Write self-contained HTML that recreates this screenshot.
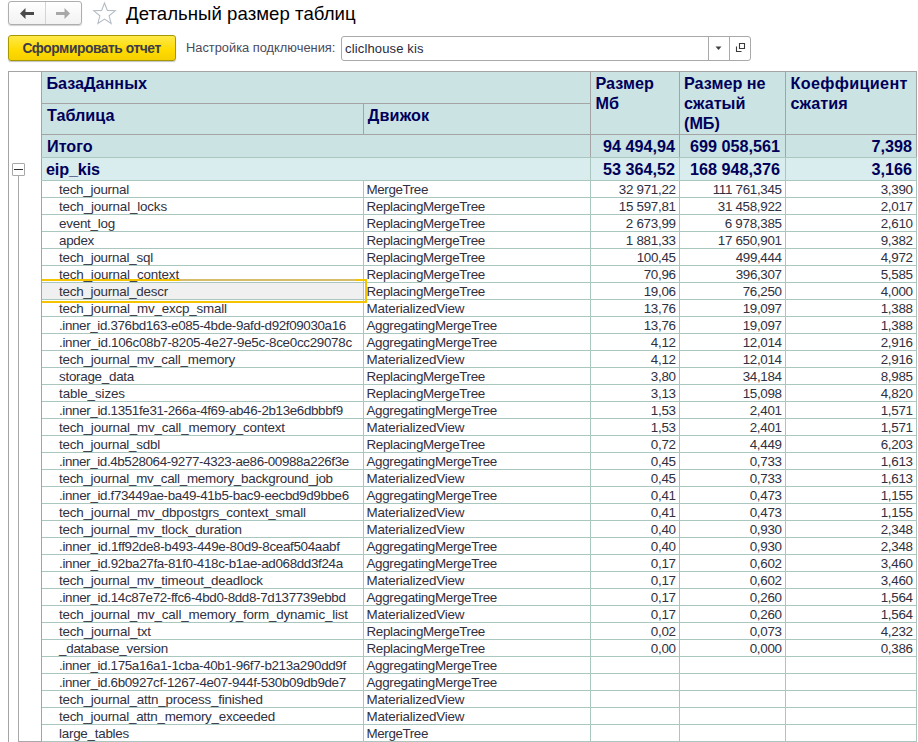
<!DOCTYPE html>
<html><head><meta charset="utf-8"><style>
html,body{margin:0;padding:0;background:#fff;width:918px;height:742px;overflow:hidden;position:relative}
body>div,body>svg{position:absolute}
.t{font-family:"Liberation Sans",sans-serif;white-space:nowrap}
</style></head><body>
<div style="left:8px;top:1px;width:74px;height:24px;border:1px solid #aeaeae;border-radius:3px;box-sizing:border-box;background:linear-gradient(#ffffff,#f2f2f2);box-shadow:0 1px 1px rgba(0,0,0,0.18)"></div>
<div style="left:45px;top:2px;width:1px;height:22px;background:#d4d4d4"></div>
<svg style="left:19px;top:7px" width="16" height="13" viewBox="0 0 16 13"><path d="M1 6.5 L6.5 1 L6.5 5 L15 5 L15 8 L6.5 8 L6.5 12 Z" fill="#4a4a4a"/></svg>
<svg style="left:55px;top:7px" width="16" height="13" viewBox="0 0 16 13"><path d="M15 6.5 L9.5 1 L9.5 5 L1 5 L1 8 L9.5 8 L9.5 12 Z" fill="#a8a8a8"/></svg>
<svg style="left:0px;top:0px" width="130" height="28" viewBox="0 0 130 28"><path d="M104.50 3.00 L107.36 10.37 L115.25 10.81 L109.12 15.80 L111.14 23.44 L104.50 19.16 L97.86 23.44 L99.88 15.80 L93.75 10.81 L101.64 10.37 Z" fill="none" stroke="#b4bcc4" stroke-width="1.1" stroke-linejoin="miter"/></svg>
<div class="t" style="left:126px;top:4.76px;font-size:18.6px;line-height:18.6px;font-weight:400;color:#000000;letter-spacing:0.043px;">Детальный размер таблиц</div>
<div style="left:8px;top:35px;width:168px;height:26px;border:1px solid #a89800;border-radius:3px;box-sizing:border-box;background:linear-gradient(#ffe94a,#ffdb00 60%,#f5d000);box-shadow:0 1px 1px rgba(0,0,0,0.25)"></div>
<div class="t" style="left:22.5px;top:41.52px;font-size:13.8px;line-height:13.8px;font-weight:700;color:#3c3c48;letter-spacing:-0.434px;">Сформировать отчет</div>
<div class="t" style="left:186px;top:42.02px;font-size:12.85px;line-height:12.85px;font-weight:400;color:#4a4a5a;">Настройка подключения:</div>
<div style="left:341px;top:36px;width:410px;height:25px;border:1px solid #a9a9a9;border-radius:3px;box-sizing:border-box;background:#fff"></div>
<div style="left:708px;top:37px;width:1px;height:23px;background:#a9a9a9"></div>
<div style="left:729px;top:37px;width:1px;height:23px;background:#a9a9a9"></div>
<div class="t" style="left:345px;top:41.60px;font-size:13px;line-height:13px;font-weight:400;color:#2a2a3a;letter-spacing:0.15px">cliclhouse kis</div>
<svg style="left:715px;top:45.5px" width="7" height="5" viewBox="0 0 7 5"><path d="M0.5 0.5 L6.5 0.5 L3.5 4 Z" fill="#404040"/></svg>
<svg style="left:735px;top:42px" width="11" height="11" viewBox="0 0 11 11"><path d="M4.5 1.5 H9.5 V6.5 H4.5 Z" fill="none" stroke="#3a3a3a" stroke-width="1.1"/><path d="M1.5 4.5 V9.5 H6.5" fill="none" stroke="#3a3a3a" stroke-width="1.1"/></svg>
<div style="left:41px;top:71px;width:875px;height:86px;background:#cbe3e3"></div>
<div style="left:41px;top:157px;width:875px;height:23px;background:#d9ecee"></div>
<div style="left:9px;top:72px;width:32px;height:669px;background:#fff"></div>
<div style="left:42px;top:181px;width:874px;height:560px;background:#fff"></div>
<div style="left:42px;top:283px;width:321px;height:16px;background:#f0f0f0"></div>
<div style="left:8px;top:71px;width:909px;height:1px;background:#a4a4a4"></div>
<div style="left:8px;top:71px;width:1px;height:671px;background:#a4a4a4"></div>
<div style="left:916px;top:71px;width:1px;height:86px;background:#a4a4a4"></div>
<div style="left:916px;top:157px;width:1px;height:585px;background:#a9c7bf"></div>
<div style="left:41px;top:71px;width:1px;height:671px;background:#a4a4a4"></div>
<div style="left:41px;top:103px;width:549px;height:1px;background:#a4a4a4"></div>
<div style="left:41px;top:134px;width:875px;height:1px;background:#a4a4a4"></div>
<div style="left:41px;top:157px;width:875px;height:1px;background:#a9c7bf"></div>
<div style="left:41px;top:180px;width:875px;height:1px;background:#a9c7bf"></div>
<div style="left:363px;top:103px;width:1px;height:31px;background:#a4a4a4"></div>
<div style="left:590px;top:71px;width:1px;height:86px;background:#a4a4a4"></div>
<div style="left:590px;top:157px;width:1px;height:585px;background:#a9c7bf"></div>
<div style="left:679px;top:71px;width:1px;height:86px;background:#a4a4a4"></div>
<div style="left:679px;top:157px;width:1px;height:585px;background:#a9c7bf"></div>
<div style="left:785px;top:71px;width:1px;height:86px;background:#a4a4a4"></div>
<div style="left:785px;top:157px;width:1px;height:585px;background:#a9c7bf"></div>
<div style="left:363px;top:180px;width:1px;height:562px;background:#a9c7bf"></div>
<div style="left:42px;top:197px;width:874px;height:1px;background:#a9c7bf"></div>
<div style="left:42px;top:214px;width:874px;height:1px;background:#a9c7bf"></div>
<div style="left:42px;top:231px;width:874px;height:1px;background:#a9c7bf"></div>
<div style="left:42px;top:248px;width:874px;height:1px;background:#a9c7bf"></div>
<div style="left:42px;top:265px;width:874px;height:1px;background:#a9c7bf"></div>
<div style="left:42px;top:282px;width:874px;height:1px;background:#a9c7bf"></div>
<div style="left:42px;top:299px;width:874px;height:1px;background:#a9c7bf"></div>
<div style="left:42px;top:316px;width:874px;height:1px;background:#a9c7bf"></div>
<div style="left:42px;top:333px;width:874px;height:1px;background:#a9c7bf"></div>
<div style="left:42px;top:350px;width:874px;height:1px;background:#a9c7bf"></div>
<div style="left:42px;top:367px;width:874px;height:1px;background:#a9c7bf"></div>
<div style="left:42px;top:384px;width:874px;height:1px;background:#a9c7bf"></div>
<div style="left:42px;top:401px;width:874px;height:1px;background:#a9c7bf"></div>
<div style="left:42px;top:418px;width:874px;height:1px;background:#a9c7bf"></div>
<div style="left:42px;top:435px;width:874px;height:1px;background:#a9c7bf"></div>
<div style="left:42px;top:452px;width:874px;height:1px;background:#a9c7bf"></div>
<div style="left:42px;top:469px;width:874px;height:1px;background:#a9c7bf"></div>
<div style="left:42px;top:486px;width:874px;height:1px;background:#a9c7bf"></div>
<div style="left:42px;top:503px;width:874px;height:1px;background:#a9c7bf"></div>
<div style="left:42px;top:520px;width:874px;height:1px;background:#a9c7bf"></div>
<div style="left:42px;top:537px;width:874px;height:1px;background:#a9c7bf"></div>
<div style="left:42px;top:554px;width:874px;height:1px;background:#a9c7bf"></div>
<div style="left:42px;top:571px;width:874px;height:1px;background:#a9c7bf"></div>
<div style="left:42px;top:588px;width:874px;height:1px;background:#a9c7bf"></div>
<div style="left:42px;top:605px;width:874px;height:1px;background:#a9c7bf"></div>
<div style="left:42px;top:622px;width:874px;height:1px;background:#a9c7bf"></div>
<div style="left:42px;top:639px;width:874px;height:1px;background:#a9c7bf"></div>
<div style="left:42px;top:656px;width:874px;height:1px;background:#a9c7bf"></div>
<div style="left:42px;top:673px;width:874px;height:1px;background:#a9c7bf"></div>
<div style="left:42px;top:690px;width:874px;height:1px;background:#a9c7bf"></div>
<div style="left:42px;top:707px;width:874px;height:1px;background:#a9c7bf"></div>
<div style="left:42px;top:724px;width:874px;height:1px;background:#a9c7bf"></div>
<div style="left:42px;top:741px;width:874px;height:1px;background:#a9c7bf"></div>
<div style="left:12px;top:163px;width:13px;height:13px;border:1px solid #a8a8a8;box-sizing:border-box;background:#fff;border-radius:1px"></div>
<div style="left:14px;top:169px;width:9px;height:1px;background:#333"></div>
<div style="left:18px;top:176px;width:1px;height:565px;background:#a8a8a8"></div>
<div style="left:18px;top:741px;width:23px;height:1px;background:#a8a8a8"></div>
<div class="t" style="left:46.4px;top:75.29px;font-size:16.2px;line-height:16.2px;font-weight:700;color:#00005a;">БазаДанных</div>
<div class="t" style="left:47px;top:107.29px;font-size:16.2px;line-height:16.2px;font-weight:700;color:#00005a;">Таблица</div>
<div class="t" style="left:367.8px;top:107.29px;font-size:16.2px;line-height:16.2px;font-weight:700;color:#00005a;letter-spacing:0.167px;">Движок</div>
<div class="t" style="left:595.5px;top:75.09px;font-size:16.2px;line-height:16.2px;font-weight:700;color:#00005a;">Размер</div>
<div class="t" style="left:595.5px;top:95.09px;font-size:16.2px;line-height:16.2px;font-weight:700;color:#00005a;">Мб</div>
<div class="t" style="left:684px;top:75.09px;font-size:16.2px;line-height:16.2px;font-weight:700;color:#00005a;">Размер не</div>
<div class="t" style="left:684px;top:95.09px;font-size:16.2px;line-height:16.2px;font-weight:700;color:#00005a;">сжатый</div>
<div class="t" style="left:684px;top:115.09px;font-size:16.2px;line-height:16.2px;font-weight:700;color:#00005a;">(МБ)</div>
<div class="t" style="left:790.6px;top:75.09px;font-size:16.2px;line-height:16.2px;font-weight:700;color:#00005a;letter-spacing:0.318px;">Коеффициент</div>
<div class="t" style="left:790.6px;top:95.09px;font-size:16.2px;line-height:16.2px;font-weight:700;color:#00005a;">сжатия</div>
<div class="t" style="left:47px;top:137.99px;font-size:16.2px;line-height:16.2px;font-weight:700;color:#00005a;">Итого</div>
<div class="t" style="right:243.00px;top:137.99px;font-size:16.2px;line-height:16.2px;font-weight:700;color:#00005a;text-align:right;">94 494,94</div>
<div class="t" style="right:138.00px;top:137.79px;font-size:16.2px;line-height:16.2px;font-weight:700;color:#00005a;text-align:right;">699 058,561</div>
<div class="t" style="right:6.00px;top:137.99px;font-size:16.2px;line-height:16.2px;font-weight:700;color:#00005a;text-align:right;">7,398</div>
<div class="t" style="left:46px;top:161.29px;font-size:16.2px;line-height:16.2px;font-weight:700;color:#00005a;letter-spacing:-0.143px;">eip_kis</div>
<div class="t" style="right:243.00px;top:161.29px;font-size:16.2px;line-height:16.2px;font-weight:700;color:#00005a;text-align:right;">53 364,52</div>
<div class="t" style="right:138.00px;top:161.29px;font-size:16.2px;line-height:16.2px;font-weight:700;color:#00005a;text-align:right;">168 948,376</div>
<div class="t" style="right:6.00px;top:161.29px;font-size:16.2px;line-height:16.2px;font-weight:700;color:#00005a;text-align:right;">3,166</div>
<div class="t" style="left:59px;top:182.66px;font-size:13.4px;line-height:13.4px;font-weight:400;color:#303040;letter-spacing:-0.251px;">tech_journal</div>
<div class="t" style="left:366.5px;top:182.66px;font-size:13.4px;line-height:13.4px;font-weight:400;color:#303040;letter-spacing:-0.393px;">MergeTree</div>
<div class="t" style="right:242.29px;top:182.66px;font-size:13.4px;line-height:13.4px;font-weight:400;color:#303040;text-align:right;letter-spacing:-0.290px;">32 971,22</div>
<div class="t" style="right:136.32px;top:182.66px;font-size:13.4px;line-height:13.4px;font-weight:400;color:#303040;text-align:right;letter-spacing:-0.320px;">111 761,345</div>
<div class="t" style="right:5.31px;top:182.66px;font-size:13.4px;line-height:13.4px;font-weight:400;color:#303040;text-align:right;letter-spacing:-0.307px;">3,390</div>
<div class="t" style="left:59px;top:199.66px;font-size:13.4px;line-height:13.4px;font-weight:400;color:#303040;letter-spacing:-0.166px;">tech_journal_locks</div>
<div class="t" style="left:366.5px;top:199.66px;font-size:13.4px;line-height:13.4px;font-weight:400;color:#303040;letter-spacing:-0.340px;">ReplacingMergeTree</div>
<div class="t" style="right:242.29px;top:199.66px;font-size:13.4px;line-height:13.4px;font-weight:400;color:#303040;text-align:right;letter-spacing:-0.290px;">15 597,81</div>
<div class="t" style="right:136.31px;top:199.66px;font-size:13.4px;line-height:13.4px;font-weight:400;color:#303040;text-align:right;letter-spacing:-0.307px;">31 458,922</div>
<div class="t" style="right:5.31px;top:199.66px;font-size:13.4px;line-height:13.4px;font-weight:400;color:#303040;text-align:right;letter-spacing:-0.307px;">2,017</div>
<div class="t" style="left:59px;top:216.66px;font-size:13.4px;line-height:13.4px;font-weight:400;color:#303040;letter-spacing:-0.235px;">event_log</div>
<div class="t" style="left:366.5px;top:216.66px;font-size:13.4px;line-height:13.4px;font-weight:400;color:#303040;letter-spacing:-0.340px;">ReplacingMergeTree</div>
<div class="t" style="right:242.27px;top:216.66px;font-size:13.4px;line-height:13.4px;font-weight:400;color:#303040;text-align:right;letter-spacing:-0.270px;">2 673,99</div>
<div class="t" style="right:136.29px;top:216.66px;font-size:13.4px;line-height:13.4px;font-weight:400;color:#303040;text-align:right;letter-spacing:-0.290px;">6 978,385</div>
<div class="t" style="right:5.31px;top:216.66px;font-size:13.4px;line-height:13.4px;font-weight:400;color:#303040;text-align:right;letter-spacing:-0.307px;">2,610</div>
<div class="t" style="left:59px;top:233.66px;font-size:13.4px;line-height:13.4px;font-weight:400;color:#303040;letter-spacing:-0.302px;">apdex</div>
<div class="t" style="left:366.5px;top:233.66px;font-size:13.4px;line-height:13.4px;font-weight:400;color:#303040;letter-spacing:-0.340px;">ReplacingMergeTree</div>
<div class="t" style="right:242.27px;top:233.66px;font-size:13.4px;line-height:13.4px;font-weight:400;color:#303040;text-align:right;letter-spacing:-0.270px;">1 881,33</div>
<div class="t" style="right:136.31px;top:233.66px;font-size:13.4px;line-height:13.4px;font-weight:400;color:#303040;text-align:right;letter-spacing:-0.307px;">17 650,901</div>
<div class="t" style="right:5.31px;top:233.66px;font-size:13.4px;line-height:13.4px;font-weight:400;color:#303040;text-align:right;letter-spacing:-0.307px;">9,382</div>
<div class="t" style="left:59px;top:250.66px;font-size:13.4px;line-height:13.4px;font-weight:400;color:#303040;letter-spacing:-0.224px;">tech_journal_sql</div>
<div class="t" style="left:366.5px;top:250.66px;font-size:13.4px;line-height:13.4px;font-weight:400;color:#303040;letter-spacing:-0.340px;">ReplacingMergeTree</div>
<div class="t" style="right:242.33px;top:250.66px;font-size:13.4px;line-height:13.4px;font-weight:400;color:#303040;text-align:right;letter-spacing:-0.331px;">100,45</div>
<div class="t" style="right:136.35px;top:250.66px;font-size:13.4px;line-height:13.4px;font-weight:400;color:#303040;text-align:right;letter-spacing:-0.348px;">499,444</div>
<div class="t" style="right:5.31px;top:250.66px;font-size:13.4px;line-height:13.4px;font-weight:400;color:#303040;text-align:right;letter-spacing:-0.307px;">4,972</div>
<div class="t" style="left:59px;top:267.66px;font-size:13.4px;line-height:13.4px;font-weight:400;color:#303040;letter-spacing:-0.183px;">tech_journal_context</div>
<div class="t" style="left:366.5px;top:267.66px;font-size:13.4px;line-height:13.4px;font-weight:400;color:#303040;letter-spacing:-0.340px;">ReplacingMergeTree</div>
<div class="t" style="right:242.31px;top:267.66px;font-size:13.4px;line-height:13.4px;font-weight:400;color:#303040;text-align:right;letter-spacing:-0.307px;">70,96</div>
<div class="t" style="right:136.35px;top:267.66px;font-size:13.4px;line-height:13.4px;font-weight:400;color:#303040;text-align:right;letter-spacing:-0.348px;">396,307</div>
<div class="t" style="right:5.31px;top:267.66px;font-size:13.4px;line-height:13.4px;font-weight:400;color:#303040;text-align:right;letter-spacing:-0.307px;">5,585</div>
<div class="t" style="left:59px;top:284.66px;font-size:13.4px;line-height:13.4px;font-weight:400;color:#303040;letter-spacing:-0.235px;">tech_journal_descr</div>
<div class="t" style="left:366.5px;top:284.66px;font-size:13.4px;line-height:13.4px;font-weight:400;color:#303040;letter-spacing:-0.340px;">ReplacingMergeTree</div>
<div class="t" style="right:242.31px;top:284.66px;font-size:13.4px;line-height:13.4px;font-weight:400;color:#303040;text-align:right;letter-spacing:-0.307px;">19,06</div>
<div class="t" style="right:136.33px;top:284.66px;font-size:13.4px;line-height:13.4px;font-weight:400;color:#303040;text-align:right;letter-spacing:-0.331px;">76,250</div>
<div class="t" style="right:5.31px;top:284.66px;font-size:13.4px;line-height:13.4px;font-weight:400;color:#303040;text-align:right;letter-spacing:-0.307px;">4,000</div>
<div class="t" style="left:59px;top:301.66px;font-size:13.4px;line-height:13.4px;font-weight:400;color:#303040;letter-spacing:-0.185px;">tech_journal_mv_excp_small</div>
<div class="t" style="left:366.5px;top:301.66px;font-size:13.4px;line-height:13.4px;font-weight:400;color:#303040;letter-spacing:-0.205px;">MaterializedView</div>
<div class="t" style="right:242.31px;top:301.66px;font-size:13.4px;line-height:13.4px;font-weight:400;color:#303040;text-align:right;letter-spacing:-0.307px;">13,76</div>
<div class="t" style="right:136.33px;top:301.66px;font-size:13.4px;line-height:13.4px;font-weight:400;color:#303040;text-align:right;letter-spacing:-0.331px;">19,097</div>
<div class="t" style="right:5.31px;top:301.66px;font-size:13.4px;line-height:13.4px;font-weight:400;color:#303040;text-align:right;letter-spacing:-0.307px;">1,388</div>
<div class="t" style="left:59px;top:318.66px;font-size:13.4px;line-height:13.4px;font-weight:400;color:#303040;letter-spacing:-0.369px;">.inner_id.376bd163-e085-4bde-9afd-d92f09030a16</div>
<div class="t" style="left:366.5px;top:318.66px;font-size:13.4px;line-height:13.4px;font-weight:400;color:#303040;letter-spacing:-0.340px;">AggregatingMergeTree</div>
<div class="t" style="right:242.31px;top:318.66px;font-size:13.4px;line-height:13.4px;font-weight:400;color:#303040;text-align:right;letter-spacing:-0.307px;">13,76</div>
<div class="t" style="right:136.33px;top:318.66px;font-size:13.4px;line-height:13.4px;font-weight:400;color:#303040;text-align:right;letter-spacing:-0.331px;">19,097</div>
<div class="t" style="right:5.31px;top:318.66px;font-size:13.4px;line-height:13.4px;font-weight:400;color:#303040;text-align:right;letter-spacing:-0.307px;">1,388</div>
<div class="t" style="left:59px;top:335.66px;font-size:13.4px;line-height:13.4px;font-weight:400;color:#303040;letter-spacing:-0.303px;">.inner_id.106c08b7-8205-4e27-9e5c-8ce0cc29078c</div>
<div class="t" style="left:366.5px;top:335.66px;font-size:13.4px;line-height:13.4px;font-weight:400;color:#303040;letter-spacing:-0.340px;">AggregatingMergeTree</div>
<div class="t" style="right:242.27px;top:335.66px;font-size:13.4px;line-height:13.4px;font-weight:400;color:#303040;text-align:right;letter-spacing:-0.270px;">4,12</div>
<div class="t" style="right:136.33px;top:335.66px;font-size:13.4px;line-height:13.4px;font-weight:400;color:#303040;text-align:right;letter-spacing:-0.331px;">12,014</div>
<div class="t" style="right:5.31px;top:335.66px;font-size:13.4px;line-height:13.4px;font-weight:400;color:#303040;text-align:right;letter-spacing:-0.307px;">2,916</div>
<div class="t" style="left:59px;top:352.66px;font-size:13.4px;line-height:13.4px;font-weight:400;color:#303040;letter-spacing:-0.212px;">tech_journal_mv_call_memory</div>
<div class="t" style="left:366.5px;top:352.66px;font-size:13.4px;line-height:13.4px;font-weight:400;color:#303040;letter-spacing:-0.205px;">MaterializedView</div>
<div class="t" style="right:242.27px;top:352.66px;font-size:13.4px;line-height:13.4px;font-weight:400;color:#303040;text-align:right;letter-spacing:-0.270px;">4,12</div>
<div class="t" style="right:136.33px;top:352.66px;font-size:13.4px;line-height:13.4px;font-weight:400;color:#303040;text-align:right;letter-spacing:-0.331px;">12,014</div>
<div class="t" style="right:5.31px;top:352.66px;font-size:13.4px;line-height:13.4px;font-weight:400;color:#303040;text-align:right;letter-spacing:-0.307px;">2,916</div>
<div class="t" style="left:59px;top:369.66px;font-size:13.4px;line-height:13.4px;font-weight:400;color:#303040;letter-spacing:-0.269px;">storage_data</div>
<div class="t" style="left:366.5px;top:369.66px;font-size:13.4px;line-height:13.4px;font-weight:400;color:#303040;letter-spacing:-0.340px;">ReplacingMergeTree</div>
<div class="t" style="right:242.27px;top:369.66px;font-size:13.4px;line-height:13.4px;font-weight:400;color:#303040;text-align:right;letter-spacing:-0.270px;">3,80</div>
<div class="t" style="right:136.33px;top:369.66px;font-size:13.4px;line-height:13.4px;font-weight:400;color:#303040;text-align:right;letter-spacing:-0.331px;">34,184</div>
<div class="t" style="right:5.31px;top:369.66px;font-size:13.4px;line-height:13.4px;font-weight:400;color:#303040;text-align:right;letter-spacing:-0.307px;">8,985</div>
<div class="t" style="left:59px;top:386.66px;font-size:13.4px;line-height:13.4px;font-weight:400;color:#303040;letter-spacing:-0.094px;">table_sizes</div>
<div class="t" style="left:366.5px;top:386.66px;font-size:13.4px;line-height:13.4px;font-weight:400;color:#303040;letter-spacing:-0.340px;">ReplacingMergeTree</div>
<div class="t" style="right:242.27px;top:386.66px;font-size:13.4px;line-height:13.4px;font-weight:400;color:#303040;text-align:right;letter-spacing:-0.270px;">3,13</div>
<div class="t" style="right:136.33px;top:386.66px;font-size:13.4px;line-height:13.4px;font-weight:400;color:#303040;text-align:right;letter-spacing:-0.331px;">15,098</div>
<div class="t" style="right:5.31px;top:386.66px;font-size:13.4px;line-height:13.4px;font-weight:400;color:#303040;text-align:right;letter-spacing:-0.307px;">4,820</div>
<div class="t" style="left:59px;top:403.66px;font-size:13.4px;line-height:13.4px;font-weight:400;color:#303040;letter-spacing:-0.354px;">.inner_id.1351fe31-266a-4f69-ab46-2b13e6dbbbf9</div>
<div class="t" style="left:366.5px;top:403.66px;font-size:13.4px;line-height:13.4px;font-weight:400;color:#303040;letter-spacing:-0.340px;">AggregatingMergeTree</div>
<div class="t" style="right:242.27px;top:403.66px;font-size:13.4px;line-height:13.4px;font-weight:400;color:#303040;text-align:right;letter-spacing:-0.270px;">1,53</div>
<div class="t" style="right:136.31px;top:403.66px;font-size:13.4px;line-height:13.4px;font-weight:400;color:#303040;text-align:right;letter-spacing:-0.307px;">2,401</div>
<div class="t" style="right:5.31px;top:403.66px;font-size:13.4px;line-height:13.4px;font-weight:400;color:#303040;text-align:right;letter-spacing:-0.307px;">1,571</div>
<div class="t" style="left:59px;top:420.66px;font-size:13.4px;line-height:13.4px;font-weight:400;color:#303040;letter-spacing:-0.182px;">tech_journal_mv_call_memory_context</div>
<div class="t" style="left:366.5px;top:420.66px;font-size:13.4px;line-height:13.4px;font-weight:400;color:#303040;letter-spacing:-0.205px;">MaterializedView</div>
<div class="t" style="right:242.27px;top:420.66px;font-size:13.4px;line-height:13.4px;font-weight:400;color:#303040;text-align:right;letter-spacing:-0.270px;">1,53</div>
<div class="t" style="right:136.31px;top:420.66px;font-size:13.4px;line-height:13.4px;font-weight:400;color:#303040;text-align:right;letter-spacing:-0.307px;">2,401</div>
<div class="t" style="right:5.31px;top:420.66px;font-size:13.4px;line-height:13.4px;font-weight:400;color:#303040;text-align:right;letter-spacing:-0.307px;">1,571</div>
<div class="t" style="left:59px;top:437.66px;font-size:13.4px;line-height:13.4px;font-weight:400;color:#303040;letter-spacing:-0.238px;">tech_journal_sdbl</div>
<div class="t" style="left:366.5px;top:437.66px;font-size:13.4px;line-height:13.4px;font-weight:400;color:#303040;letter-spacing:-0.340px;">ReplacingMergeTree</div>
<div class="t" style="right:242.27px;top:437.66px;font-size:13.4px;line-height:13.4px;font-weight:400;color:#303040;text-align:right;letter-spacing:-0.270px;">0,72</div>
<div class="t" style="right:136.31px;top:437.66px;font-size:13.4px;line-height:13.4px;font-weight:400;color:#303040;text-align:right;letter-spacing:-0.307px;">4,449</div>
<div class="t" style="right:5.31px;top:437.66px;font-size:13.4px;line-height:13.4px;font-weight:400;color:#303040;text-align:right;letter-spacing:-0.307px;">6,203</div>
<div class="t" style="left:59px;top:454.66px;font-size:13.4px;line-height:13.4px;font-weight:400;color:#303040;letter-spacing:-0.385px;">.inner_id.4b528064-9277-4323-ae86-00988a226f3e</div>
<div class="t" style="left:366.5px;top:454.66px;font-size:13.4px;line-height:13.4px;font-weight:400;color:#303040;letter-spacing:-0.340px;">AggregatingMergeTree</div>
<div class="t" style="right:242.27px;top:454.66px;font-size:13.4px;line-height:13.4px;font-weight:400;color:#303040;text-align:right;letter-spacing:-0.270px;">0,45</div>
<div class="t" style="right:136.31px;top:454.66px;font-size:13.4px;line-height:13.4px;font-weight:400;color:#303040;text-align:right;letter-spacing:-0.307px;">0,733</div>
<div class="t" style="right:5.31px;top:454.66px;font-size:13.4px;line-height:13.4px;font-weight:400;color:#303040;text-align:right;letter-spacing:-0.307px;">1,613</div>
<div class="t" style="left:59px;top:471.66px;font-size:13.4px;line-height:13.4px;font-weight:400;color:#303040;letter-spacing:-0.251px;">tech_journal_mv_call_memory_background_job</div>
<div class="t" style="left:366.5px;top:471.66px;font-size:13.4px;line-height:13.4px;font-weight:400;color:#303040;letter-spacing:-0.205px;">MaterializedView</div>
<div class="t" style="right:242.27px;top:471.66px;font-size:13.4px;line-height:13.4px;font-weight:400;color:#303040;text-align:right;letter-spacing:-0.270px;">0,45</div>
<div class="t" style="right:136.31px;top:471.66px;font-size:13.4px;line-height:13.4px;font-weight:400;color:#303040;text-align:right;letter-spacing:-0.307px;">0,733</div>
<div class="t" style="right:5.31px;top:471.66px;font-size:13.4px;line-height:13.4px;font-weight:400;color:#303040;text-align:right;letter-spacing:-0.307px;">1,613</div>
<div class="t" style="left:59px;top:488.66px;font-size:13.4px;line-height:13.4px;font-weight:400;color:#303040;letter-spacing:-0.353px;">.inner_id.f73449ae-ba49-41b5-bac9-eecbd9d9bbe6</div>
<div class="t" style="left:366.5px;top:488.66px;font-size:13.4px;line-height:13.4px;font-weight:400;color:#303040;letter-spacing:-0.340px;">AggregatingMergeTree</div>
<div class="t" style="right:242.27px;top:488.66px;font-size:13.4px;line-height:13.4px;font-weight:400;color:#303040;text-align:right;letter-spacing:-0.270px;">0,41</div>
<div class="t" style="right:136.31px;top:488.66px;font-size:13.4px;line-height:13.4px;font-weight:400;color:#303040;text-align:right;letter-spacing:-0.307px;">0,473</div>
<div class="t" style="right:5.31px;top:488.66px;font-size:13.4px;line-height:13.4px;font-weight:400;color:#303040;text-align:right;letter-spacing:-0.307px;">1,155</div>
<div class="t" style="left:59px;top:505.66px;font-size:13.4px;line-height:13.4px;font-weight:400;color:#303040;letter-spacing:-0.179px;">tech_journal_mv_dbpostgrs_context_small</div>
<div class="t" style="left:366.5px;top:505.66px;font-size:13.4px;line-height:13.4px;font-weight:400;color:#303040;letter-spacing:-0.205px;">MaterializedView</div>
<div class="t" style="right:242.27px;top:505.66px;font-size:13.4px;line-height:13.4px;font-weight:400;color:#303040;text-align:right;letter-spacing:-0.270px;">0,41</div>
<div class="t" style="right:136.31px;top:505.66px;font-size:13.4px;line-height:13.4px;font-weight:400;color:#303040;text-align:right;letter-spacing:-0.307px;">0,473</div>
<div class="t" style="right:5.31px;top:505.66px;font-size:13.4px;line-height:13.4px;font-weight:400;color:#303040;text-align:right;letter-spacing:-0.307px;">1,155</div>
<div class="t" style="left:59px;top:522.66px;font-size:13.4px;line-height:13.4px;font-weight:400;color:#303040;letter-spacing:-0.207px;">tech_journal_mv_tlock_duration</div>
<div class="t" style="left:366.5px;top:522.66px;font-size:13.4px;line-height:13.4px;font-weight:400;color:#303040;letter-spacing:-0.205px;">MaterializedView</div>
<div class="t" style="right:242.27px;top:522.66px;font-size:13.4px;line-height:13.4px;font-weight:400;color:#303040;text-align:right;letter-spacing:-0.270px;">0,40</div>
<div class="t" style="right:136.31px;top:522.66px;font-size:13.4px;line-height:13.4px;font-weight:400;color:#303040;text-align:right;letter-spacing:-0.307px;">0,930</div>
<div class="t" style="right:5.31px;top:522.66px;font-size:13.4px;line-height:13.4px;font-weight:400;color:#303040;text-align:right;letter-spacing:-0.307px;">2,348</div>
<div class="t" style="left:59px;top:539.66px;font-size:13.4px;line-height:13.4px;font-weight:400;color:#303040;letter-spacing:-0.321px;">.inner_id.1ff92de8-b493-449e-80d9-8ceaf504aabf</div>
<div class="t" style="left:366.5px;top:539.66px;font-size:13.4px;line-height:13.4px;font-weight:400;color:#303040;letter-spacing:-0.340px;">AggregatingMergeTree</div>
<div class="t" style="right:242.27px;top:539.66px;font-size:13.4px;line-height:13.4px;font-weight:400;color:#303040;text-align:right;letter-spacing:-0.270px;">0,40</div>
<div class="t" style="right:136.31px;top:539.66px;font-size:13.4px;line-height:13.4px;font-weight:400;color:#303040;text-align:right;letter-spacing:-0.307px;">0,930</div>
<div class="t" style="right:5.31px;top:539.66px;font-size:13.4px;line-height:13.4px;font-weight:400;color:#303040;text-align:right;letter-spacing:-0.307px;">2,348</div>
<div class="t" style="left:59px;top:556.66px;font-size:13.4px;line-height:13.4px;font-weight:400;color:#303040;letter-spacing:-0.337px;">.inner_id.92ba27fa-81f0-418c-b1ae-ad068dd3f24a</div>
<div class="t" style="left:366.5px;top:556.66px;font-size:13.4px;line-height:13.4px;font-weight:400;color:#303040;letter-spacing:-0.340px;">AggregatingMergeTree</div>
<div class="t" style="right:242.27px;top:556.66px;font-size:13.4px;line-height:13.4px;font-weight:400;color:#303040;text-align:right;letter-spacing:-0.270px;">0,17</div>
<div class="t" style="right:136.31px;top:556.66px;font-size:13.4px;line-height:13.4px;font-weight:400;color:#303040;text-align:right;letter-spacing:-0.307px;">0,602</div>
<div class="t" style="right:5.31px;top:556.66px;font-size:13.4px;line-height:13.4px;font-weight:400;color:#303040;text-align:right;letter-spacing:-0.307px;">3,460</div>
<div class="t" style="left:59px;top:573.66px;font-size:13.4px;line-height:13.4px;font-weight:400;color:#303040;letter-spacing:-0.213px;">tech_journal_mv_timeout_deadlock</div>
<div class="t" style="left:366.5px;top:573.66px;font-size:13.4px;line-height:13.4px;font-weight:400;color:#303040;letter-spacing:-0.205px;">MaterializedView</div>
<div class="t" style="right:242.27px;top:573.66px;font-size:13.4px;line-height:13.4px;font-weight:400;color:#303040;text-align:right;letter-spacing:-0.270px;">0,17</div>
<div class="t" style="right:136.31px;top:573.66px;font-size:13.4px;line-height:13.4px;font-weight:400;color:#303040;text-align:right;letter-spacing:-0.307px;">0,602</div>
<div class="t" style="right:5.31px;top:573.66px;font-size:13.4px;line-height:13.4px;font-weight:400;color:#303040;text-align:right;letter-spacing:-0.307px;">3,460</div>
<div class="t" style="left:59px;top:590.66px;font-size:13.4px;line-height:13.4px;font-weight:400;color:#303040;letter-spacing:-0.337px;">.inner_id.14c87e72-ffc6-4bd0-8dd8-7d137739ebbd</div>
<div class="t" style="left:366.5px;top:590.66px;font-size:13.4px;line-height:13.4px;font-weight:400;color:#303040;letter-spacing:-0.340px;">AggregatingMergeTree</div>
<div class="t" style="right:242.27px;top:590.66px;font-size:13.4px;line-height:13.4px;font-weight:400;color:#303040;text-align:right;letter-spacing:-0.270px;">0,17</div>
<div class="t" style="right:136.31px;top:590.66px;font-size:13.4px;line-height:13.4px;font-weight:400;color:#303040;text-align:right;letter-spacing:-0.307px;">0,260</div>
<div class="t" style="right:5.31px;top:590.66px;font-size:13.4px;line-height:13.4px;font-weight:400;color:#303040;text-align:right;letter-spacing:-0.307px;">1,564</div>
<div class="t" style="left:59px;top:607.66px;font-size:13.4px;line-height:13.4px;font-weight:400;color:#303040;letter-spacing:-0.181px;">tech_journal_mv_call_memory_form_dynamic_list</div>
<div class="t" style="left:366.5px;top:607.66px;font-size:13.4px;line-height:13.4px;font-weight:400;color:#303040;letter-spacing:-0.205px;">MaterializedView</div>
<div class="t" style="right:242.27px;top:607.66px;font-size:13.4px;line-height:13.4px;font-weight:400;color:#303040;text-align:right;letter-spacing:-0.270px;">0,17</div>
<div class="t" style="right:136.31px;top:607.66px;font-size:13.4px;line-height:13.4px;font-weight:400;color:#303040;text-align:right;letter-spacing:-0.307px;">0,260</div>
<div class="t" style="right:5.31px;top:607.66px;font-size:13.4px;line-height:13.4px;font-weight:400;color:#303040;text-align:right;letter-spacing:-0.307px;">1,564</div>
<div class="t" style="left:59px;top:624.66px;font-size:13.4px;line-height:13.4px;font-weight:400;color:#303040;letter-spacing:-0.163px;">tech_journal_txt</div>
<div class="t" style="left:366.5px;top:624.66px;font-size:13.4px;line-height:13.4px;font-weight:400;color:#303040;letter-spacing:-0.340px;">ReplacingMergeTree</div>
<div class="t" style="right:242.27px;top:624.66px;font-size:13.4px;line-height:13.4px;font-weight:400;color:#303040;text-align:right;letter-spacing:-0.270px;">0,02</div>
<div class="t" style="right:136.31px;top:624.66px;font-size:13.4px;line-height:13.4px;font-weight:400;color:#303040;text-align:right;letter-spacing:-0.307px;">0,073</div>
<div class="t" style="right:5.31px;top:624.66px;font-size:13.4px;line-height:13.4px;font-weight:400;color:#303040;text-align:right;letter-spacing:-0.307px;">4,232</div>
<div class="t" style="left:59px;top:641.66px;font-size:13.4px;line-height:13.4px;font-weight:400;color:#303040;letter-spacing:-0.249px;">_database_version</div>
<div class="t" style="left:366.5px;top:641.66px;font-size:13.4px;line-height:13.4px;font-weight:400;color:#303040;letter-spacing:-0.340px;">ReplacingMergeTree</div>
<div class="t" style="right:242.27px;top:641.66px;font-size:13.4px;line-height:13.4px;font-weight:400;color:#303040;text-align:right;letter-spacing:-0.270px;">0,00</div>
<div class="t" style="right:136.31px;top:641.66px;font-size:13.4px;line-height:13.4px;font-weight:400;color:#303040;text-align:right;letter-spacing:-0.307px;">0,000</div>
<div class="t" style="right:5.31px;top:641.66px;font-size:13.4px;line-height:13.4px;font-weight:400;color:#303040;text-align:right;letter-spacing:-0.307px;">0,386</div>
<div class="t" style="left:59px;top:658.66px;font-size:13.4px;line-height:13.4px;font-weight:400;color:#303040;letter-spacing:-0.353px;">.inner_id.175a16a1-1cba-40b1-96f7-b213a290dd9f</div>
<div class="t" style="left:366.5px;top:658.66px;font-size:13.4px;line-height:13.4px;font-weight:400;color:#303040;letter-spacing:-0.340px;">AggregatingMergeTree</div>
<div class="t" style="left:59px;top:675.66px;font-size:13.4px;line-height:13.4px;font-weight:400;color:#303040;letter-spacing:-0.353px;">.inner_id.6b0927cf-1267-4e07-944f-530b09db9de7</div>
<div class="t" style="left:366.5px;top:675.66px;font-size:13.4px;line-height:13.4px;font-weight:400;color:#303040;letter-spacing:-0.340px;">AggregatingMergeTree</div>
<div class="t" style="left:59px;top:692.66px;font-size:13.4px;line-height:13.4px;font-weight:400;color:#303040;letter-spacing:-0.201px;">tech_journal_attn_process_finished</div>
<div class="t" style="left:366.5px;top:692.66px;font-size:13.4px;line-height:13.4px;font-weight:400;color:#303040;letter-spacing:-0.205px;">MaterializedView</div>
<div class="t" style="left:59px;top:709.66px;font-size:13.4px;line-height:13.4px;font-weight:400;color:#303040;letter-spacing:-0.249px;">tech_journal_attn_memory_exceeded</div>
<div class="t" style="left:366.5px;top:709.66px;font-size:13.4px;line-height:13.4px;font-weight:400;color:#303040;letter-spacing:-0.205px;">MaterializedView</div>
<div class="t" style="left:59px;top:726.66px;font-size:13.4px;line-height:13.4px;font-weight:400;color:#303040;letter-spacing:-0.251px;">large_tables</div>
<div class="t" style="left:366.5px;top:726.66px;font-size:13.4px;line-height:13.4px;font-weight:400;color:#303040;letter-spacing:-0.393px;">MergeTree</div>
<div style="left:42px;top:279px;width:137px;height:2px;background:#f5c400"></div>
<div style="left:179px;top:279px;width:176px;height:2px;background:#d6bd6a"></div>
<div style="left:355px;top:279px;width:12px;height:2px;background:#f5c400"></div>
<div style="left:42px;top:301px;width:325px;height:2px;background:#f5c400"></div>
<div style="left:365px;top:279px;width:2px;height:24px;background:#f5c400"></div>
</body></html>
